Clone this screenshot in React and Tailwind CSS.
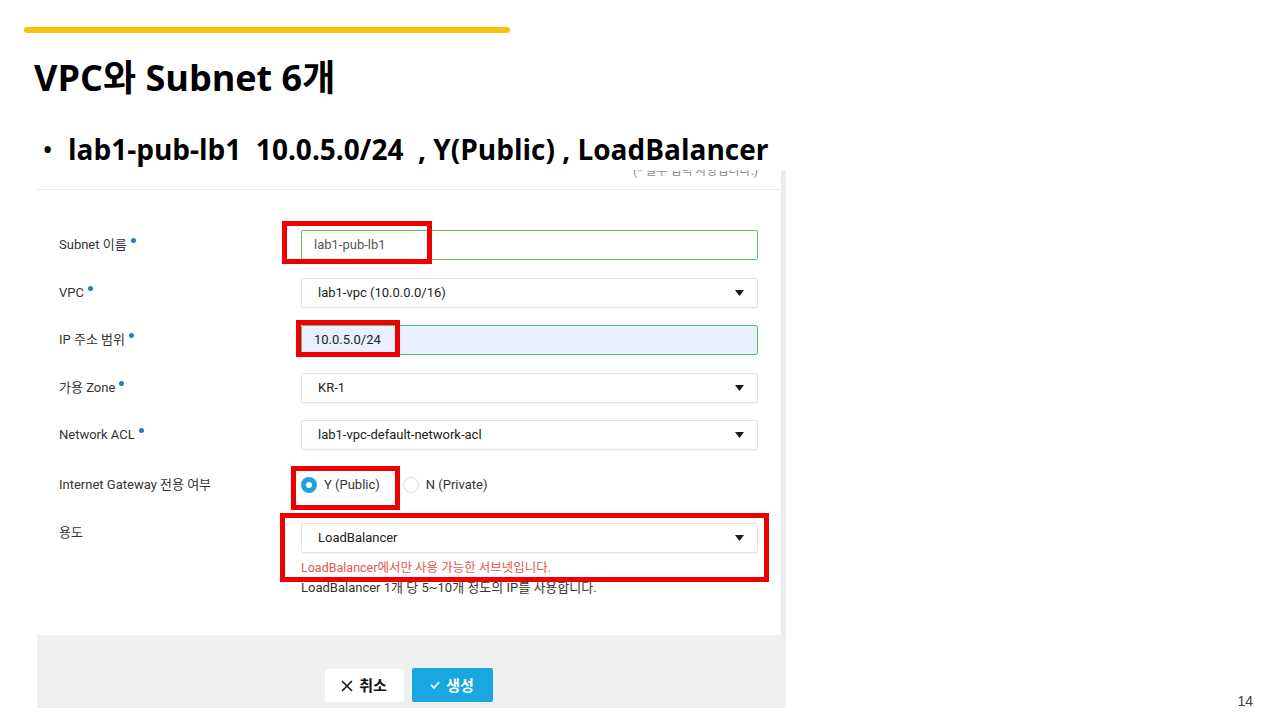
import React from "react"

const slideFont = "font-['Open_Sans','Noto_Sans_CJK_KR',sans-serif]"
const formFont = "font-['Roboto','Noto_Sans_CJK_KR',sans-serif]"

function Dot() {
    return <span className="ml-[4px] mb-[9px] w-[5px] h-[5px] rounded-full bg-[#1b7fd6]" />
}

function Label({ text, required }) {
    return (
        <div className="w-[242px] flex items-center text-[13px] text-[#333]">
            <span>{text}</span>
            {required && <Dot />}
        </div>
    )
}

function Arrow() {
    return (
        <svg width="9" height="6" viewBox="0 0 9 6" className="shrink-0">
            <path d="M0 0 L9 0 L4.5 6 Z" fill="#1a1a1a" />
        </svg>
    )
}

function SelectBox({ value }) {
    return (
        <div className="w-[457px] h-[30px] flex items-center justify-between pl-[16px] pr-[13px] bg-white border border-[#e4e4e4] rounded-[2px] shadow-[0_1px_1px_rgba(0,0,0,0.04)] text-[13px] text-[#222]">
            <span>{value}</span>
            <Arrow />
        </div>
    )
}

function Row({ label, required, children, className = "" }) {
    return (
        <div className={`flex items-center h-[30px] ${className}`}>
            <Label text={label} required={required} />
            {children}
        </div>
    )
}

function Radio({ checked, label }) {
    return (
        <div className="flex items-center gap-[7px]">
            {checked ? (
                <span className="w-4 h-4 rounded-full bg-[#1aa3e2] flex items-center justify-center">
                    <span className="w-[6px] h-[6px] rounded-full bg-white" />
                </span>
            ) : (
                <span className="w-4 h-4 rounded-full border border-[#dcdcdc] bg-white" />
            )}
            <span className="text-[13px] text-[#333]">{label}</span>
        </div>
    )
}

function SubnetForm() {
    return (
        <div className={`ml-[37px] w-[749px] h-[538px] overflow-hidden flex flex-col ${formFont}`}>
            <div className="flex flex-1">
                <div className="w-[744px] bg-white flex flex-col">
                    {/* header strip, scrolled so only the lower half of the note shows */}
                    <div className="h-[20px] border-b border-[#e9e9e9] flex justify-end pr-[23px] overflow-hidden">
                        <span className="-mt-[7px] leading-[16px] text-[12px] text-[#8a8a8a]">(* 필수 입력 사항입니다.)</span>
                    </div>

                    <div className="pl-[22px] pt-[40px] flex flex-col">
                        <Row label="Subnet 이름" required>
                            <div className="w-[457px] h-[30px] flex items-center pl-[12px] border border-[#5cbf6a] rounded-[2px] text-[13px] text-[#555]">
                                lab1-pub-lb1
                            </div>
                        </Row>
                        <Row label="VPC" required className="mt-[17.5px]">
                            <SelectBox value="lab1-vpc (10.0.0.0/16)" />
                        </Row>
                        <Row label="IP 주소 범위" required className="mt-[17.5px]">
                            <div className="w-[457px] h-[30px] flex items-center pl-[12px] bg-[#e8f0fe] border border-[#5cbf6a] rounded-[2px] text-[13px] text-[#222]">
                                10.0.5.0/24
                            </div>
                        </Row>
                        <Row label="가용 Zone" required className="mt-[17.5px]">
                            <SelectBox value="KR-1" />
                        </Row>
                        <Row label="Network ACL" required className="mt-[17.5px]">
                            <SelectBox value="lab1-vpc-default-network-acl" />
                        </Row>
                        <Row label="Internet Gateway 전용 여부" className="mt-[20px]">
                            <div className="flex items-center gap-[23px]">
                                <Radio checked label="Y (Public)" />
                                <Radio label="N (Private)" />
                            </div>
                        </Row>

                        <div className="flex mt-[23px]">
                            <div className="w-[242px] leading-[20px] text-[13px] text-[#333]">용도</div>
                            <div className="flex flex-col">
                                <SelectBox value="LoadBalancer" />
                                <div className="mt-[5px] leading-[20px] text-[12.5px] text-[#e2574e]">
                                    LoadBalancer에서만 사용 가능한 서브넷입니다.
                                </div>
                                <div className="-mt-[1px] leading-[21px] text-[13px] text-[#333]">
                                    LoadBalancer 1개 당 5~10개 정도의 IP를 사용합니다.
                                </div>
                            </div>
                        </div>
                    </div>
                </div>
                <div className="w-[5px] bg-[#ececec]" />
            </div>

            <div className="h-[73px] shrink-0 bg-[#efefef] flex justify-center gap-[8px] pt-[34px] pr-[6px]">
                <button className="w-[79px] h-[33px] bg-white rounded-[2px] flex items-center justify-center gap-[6px] text-[15px] font-bold text-[#111] font-['Noto_Sans_CJK_KR',sans-serif]">
                    <svg width="12" height="12" viewBox="0 0 12 12">
                        <path d="M1 1 L11 11 M11 1 L1 11" stroke="#111" strokeWidth="1.6" />
                    </svg>
                    취소
                </button>
                <button className="w-[81px] h-[34px] -mt-[1px] bg-[#1aa7e1] rounded-[2px] flex items-center justify-center gap-[6px] text-[15px] font-bold text-white font-['Noto_Sans_CJK_KR',sans-serif]">
                    <svg width="10" height="8" viewBox="0 0 10 8">
                        <path d="M1 3.8 L4 6.8 L9.2 1.2" stroke="#fff" strokeWidth="1.7" fill="none" />
                    </svg>
                    생성
                </button>
            </div>
        </div>
    )
}

export default function App() {
    return (
        <div className="relative w-[1280px] h-[720px] overflow-hidden bg-white">
            <div className="mt-[27px] ml-[24px] w-[486px] h-[6px] rounded-full bg-[#f9c20f]" />

            <h1 className={`ml-[34px] mt-[27px] text-[36px] leading-[36px] font-bold text-black ${slideFont}`}>
                VPC와 Subnet 6개
            </h1>

            <div className={`ml-[42px] mt-[40px] flex items-center text-[28px] leading-[26px] font-bold text-black ${slideFont}`}>
                <span className="w-[26px] text-[30px] font-normal">•</span>
                <span className="whitespace-pre">lab1-pub-lb1  10.0.5.0/24  , Y(Public) , LoadBalancer</span>
            </div>

            <div className="mt-[8px] flex justify-between items-end">
                <SubnetForm />
                <span className="mr-[27px] text-[14px] leading-[14px] text-[#404040] font-['Liberation_Sans',sans-serif]">14</span>
            </div>

            {/* red callout boxes drawn over the form */}
            <div className="absolute left-[282px] top-[221px] w-[150px] h-[43px] border-[5px] border-[#ee0000]" />
            <div className="absolute left-[296px] top-[320px] w-[104px] h-[37px] border-[5px] border-[#ee0000]" />
            <div className="absolute left-[291px] top-[466px] w-[109px] h-[44px] border-[5px] border-[#ee0000]" />
            <div className="absolute left-[280px] top-[513px] w-[489px] h-[69px] border-[5px] border-[#ee0000]" />
        </div>
    )
}
